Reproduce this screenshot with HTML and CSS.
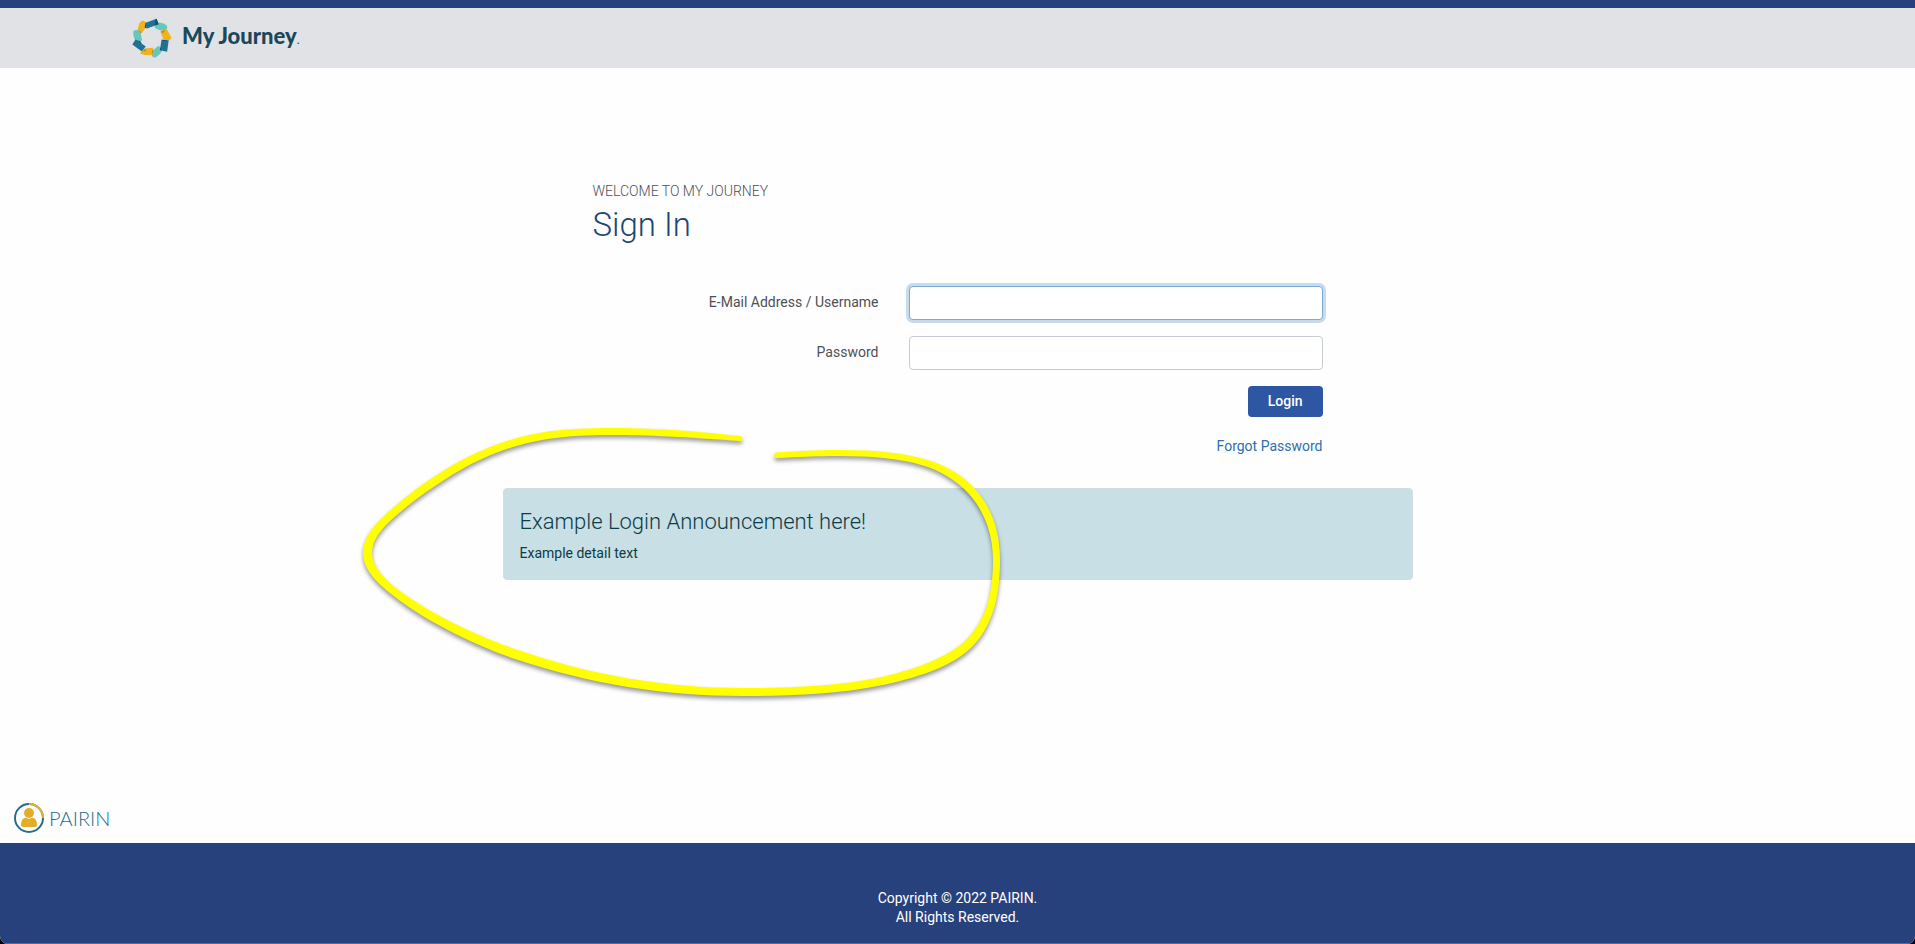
FILE: index.html
```html
<!DOCTYPE html>
<html lang="en">
<head>
    <meta charset="UTF-8">
    <title>My Journey - Sign In</title>
    <link rel="stylesheet" href="styles.css">
</head>
<body>
<div class="page">
    <header class="header">
        <a class="brand" href="#">
            <svg class="brand-logo" viewBox="12 10 120 122" aria-hidden="true">
                <path fill="#66c8ba" d="M84 24Q106 22 117 33Q122 42 112 47Q98 52 80 40Z"/>
                <path fill="#f0b31e" d="M28 48Q32 20 44 18L56 24L50 44L38 57Z"/>
                <path fill="#1e7394" d="M51 25L86 12L92 29L57 42Z"/>
                <path fill="#66c8ba" d="M15 50Q26 43 36 49L42 78L26 85Q13 72 15 50Z"/>
                <path fill="#1e7394" d="M22 75L53 97L41 112L12 91Z"/>
                <path fill="#f0b31e" d="M97 51Q108 44 118 45L132 72Q122 82 108 77Z"/>
                <path fill="#1e7394" d="M101 76L123 78L118 113L96 108Z"/>
                <path fill="#66c8ba" d="M71 113L91 95Q100 99 103 109Q95 125 80 131L72 127Z"/>
                <path fill="#f0b31e" d="M37 116Q46 103 56 102L76 101L74 123Q54 126 37 119Z"/>
                <path fill="#12506d" d="M83 13L86 12L92 29L80 33ZM51 25L57 42L50 40ZM26 78L41 89L37 81ZM101 76L119 78L108 81ZM97 98L103 109L96 108Z"/>
                <path fill="#b98c2c" d="M30 47L41 54L38 57ZM99 51L112 46L106 57ZM42 111L53 102L53 112ZM71 112L76 105L74 122Z"/>
            </svg>
            <span class="brand-name">My Journey<span class="brand-mark">.</span></span>
        </a>
    </header>

    <main class="main">
        <form class="login">
            <p class="login-welcome">Welcome to My Journey</p>
            <h1 class="login-title">Sign In</h1>
            <div class="form-row">
                <label for="username">E-Mail Address / Username</label>
                <input id="username" class="form-control active" type="text">
            </div>
            <div class="form-row">
                <label for="password">Password</label>
                <input id="password" class="form-control" type="password">
            </div>
            <div class="form-actions">
                <button class="btn" type="submit">Login</button>
                <a class="forgot" href="#">Forgot Password</a>
            </div>
        </form>

        <section class="announcement">
            <h2 class="announcement-title">Example Login Announcement here!</h2>
            <p class="announcement-text">Example detail text</p>
            <!-- hand-drawn highlight over the announcement -->
            <svg class="highlight" viewBox="0 0 660 300" aria-hidden="true">
                <path d="M390 26C335 20 300 18 260 18C195 18 158 26 110 51C75 70 45 95 30 110C18 122 13 132 13 143C13 160 28 174 45 187C80 214 130 237 165 249C240 274 315 286 393 286C440 286 490 284 533 275C575 266 605 254 623 236C641 217 650 190 650 150C650 122 642 98 625 79C602 53 565 40 490 40C465 40 445 41 427 42.500A2.600 2.600 0 0 0 427 48C445 47 465 46 490 46C560 46 594 57 619 84C635 102 643 125 643 150C643 188 634 211 617 229C600 246 570 258 532 267C490 276 440 278 393 278C315 278 240 265 168 240C135 229 85 207 50 181C35 170 22 156 22 143C22 134 26 126 36 115C50 101 80 77 114 58C160 33 200 25 260 25C300 25 335 27 390 31A2.500 2.500 0 0 0 390 26Z"/>
            </svg>
        </section>
    </main>

    <div class="powered">
        <svg class="powered-logo" viewBox="0 0 30 30" aria-hidden="true">
            <circle cx="15" cy="15" r="14" fill="none" stroke="#276c8b" stroke-width="2"/>
            <path d="M15 1A14 14 0 0 1 29 15" fill="none" stroke="#e8b32a" stroke-width="2"/>
            <circle cx="15" cy="10" r="5" fill="#e3ad27"/>
            <path fill="#e3ad27" d="M7 22Q7 15 12 14.500Q15 17 18 14.500Q23 15 23 22Q23 24 20 24H10Q7 24 7 22Z"/>
        </svg>
        <span class="powered-name">PAIRIN</span>
    </div>

    <footer class="footer">
        <div>Copyright © 2022 PAIRIN.</div>
        <div>All Rights Reserved.</div>
    </footer>
</div>
</body>
</html>
```
FILE: styles.css
```css
* {
    box-sizing: border-box;
}

html {
    background: #000;
}

body {
    margin: 0;
    font-family: Roboto, "Liberation Sans", sans-serif;
    font-size: 14px;
    line-height: 20px;
    color: #4e5056;
}

h1, h2, p {
    margin: 0;
    font-weight: 300;
}

a {
    color: #2c6fad;
    text-decoration: none;
}

.page {
    display: flex;
    flex-direction: column;
    min-height: 100vh;
    background: #fefefe;
    border-radius: 0 0 8px 8px;
    overflow: hidden;
}

.header {
    padding: 10px 132px;
    background: #e1e2e6;
    border-top: 8px solid #27407c;
}

.brand {
    display: flex;
    align-items: center;
    gap: 10px;
    height: 40px;
    color: #1b475a;
}

.brand-logo {
    width: 40px;
    height: 40px;
}

.brand-name {
    font-family: Lato, sans-serif;
    font-size: 22px;
    font-weight: 900;
}

.brand-mark {
    font-size: 12px;
    font-weight: 400;
}

.main {
    flex: 1;
    width: 100%;
    max-width: 910px;
    margin: 0 auto;
    padding-top: 113px;
}

.login {
    padding: 0 90px;
}

.login-welcome {
    font-weight: 300;
    text-transform: uppercase;
}

.login-title {
    margin: 3px 0 40px;
    font-size: 33px;
    line-height: 42px;
    color: #1d4672;
}

.form-row {
    display: grid;
    grid-template-columns: 9fr 13fr;
    gap: 31px;
    align-items: center;
    margin-bottom: 16px;
}

.form-row label {
    padding-bottom: 2px;
    text-align: right;
}

.form-control {
    width: 100%;
    height: 34px;
    padding: 6px 12px;
    font: inherit;
    background: #fff;
    border: 1px solid #c5cad3;
    border-radius: 4px;
}

.form-control.active,
.form-control:focus {
    border-color: #78abd8;
    outline: none;
    box-shadow: 0 0 0 3px #c9daea;
}

.form-actions {
    display: flex;
    flex-direction: column;
    align-items: flex-end;
    gap: 19px;
}

.btn {
    padding: 5px 20px 6px;
    font: inherit;
    font-weight: 500;
    color: #fff;
    background: #2d57a3;
    border: 0;
    border-radius: 4px;
}

.announcement {
    position: relative;
    margin-top: 32px;
    padding: 20px 16px 16px;
    color: #0d3b46;
    background: #c8dfe5;
    border: 1px solid #d2dde0;
    border-radius: 4px;
}

.announcement-title {
    margin-bottom: 8px;
    font-size: 22px;
    line-height: 26px;
}

.announcement-text {
    font-weight: 400;
}

.highlight {
    position: absolute;
    top: -79px;
    left: -154px;
    width: 660px;
    height: 300px;
    fill: #ff0;
    filter: drop-shadow(0 3px 2px rgba(0, 0, 0, 0.4));
    pointer-events: none;
}

.powered {
    display: flex;
    align-items: center;
    gap: 5px;
    padding: 0 14px 10px;
    color: #276c8b;
}

.powered-logo {
    width: 30px;
    height: 30px;
}

.powered-name {
    font-family: Lato, sans-serif;
    font-size: 20px;
    font-weight: 300;
}

.footer {
    padding: 46px 16px 16px;
    line-height: 19px;
    text-align: center;
    color: #fff;
    background: #27417d;
    border-bottom: 1px solid #536a9c;
}
```
